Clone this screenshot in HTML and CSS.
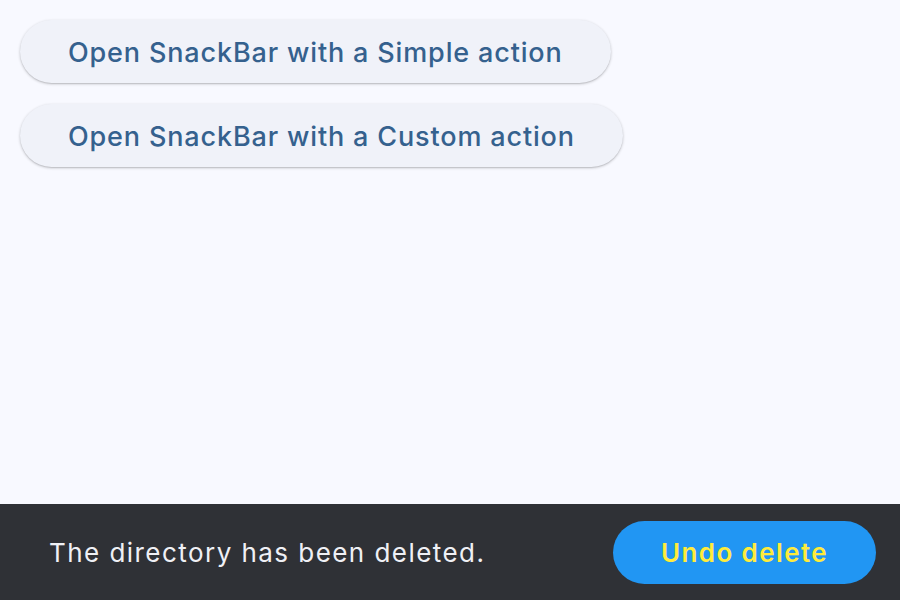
FILE: index.html
```html
<!DOCTYPE html>
<html>
<head>
<meta charset="utf-8">
<link rel="stylesheet" href="styles.css">
</head>
<body>
<main class="page">
  <button class="btn">Open SnackBar with a Simple action</button>
  <button class="btn">Open SnackBar with a Custom action</button>
</main>
<div class="snackbar">
  <span class="snack-text">The directory has been deleted.</span>
  <button class="snack-action">Undo delete</button>
</div>
</body>
</html>
```

FILE: styles.css
```css
* { box-sizing: border-box; }
html, body { margin: 0; height: 100%; }
body {
  background: #f8f9ff;
  font-family: Inter, "Noto Sans", sans-serif;
  display: flex;
  flex-direction: column;
  overflow: hidden;
}
.page {
  flex: 1;
  padding: 20px;
  display: flex;
  flex-direction: column;
  align-items: flex-start;
  gap: 21px;
}
.btn {
  height: 63px;
  padding: 1px 48px 0;
  border: none;
  border-radius: 32px;
  background: #f0f2f9;
  color: #35618e;
  font-family: inherit;
  font-size: 27px;
  font-weight: 500;
  letter-spacing: 0.85px;
  box-shadow: 0 1px 3px rgba(0,0,0,0.22), 0 1px 1px rgba(0,0,0,0.08);
}
.snackbar {
  height: 96px;
  background: #2f3136;
  display: flex;
  align-items: center;
  justify-content: space-between;
  padding: 0 24px 0 49px;
}
.snack-text {
  color: #eff0f5;
  font-size: 26px;
  font-weight: 400;
  letter-spacing: 1.45px;
}
.snack-action {
  height: 63px;
  width: 263px;
  border: none;
  border-radius: 32px;
  background: #2196f3;
  color: #ffeb3b;
  font-family: inherit;
  font-size: 26px;
  font-weight: 600;
  letter-spacing: 1.4px;
}
```
